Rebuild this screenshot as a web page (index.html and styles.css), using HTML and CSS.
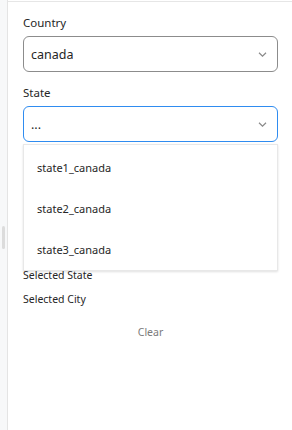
FILE: index.html
```html
<!DOCTYPE html>
<html lang="en">
<head>
  <meta charset="UTF-8">
  <meta name="viewport" content="width=device-width, initial-scale=1.0">
  <title>Country State City</title>
  <link rel="stylesheet" href="styles.css">
</head>
<body>
  <div class="page">
    <aside class="rail">
      <div class="rail-thumb"></div>
    </aside>

    <main class="panel">
      <div class="field">
        <label class="field-label">Country</label>
        <div class="select">
          <span class="select-value">canada</span>
          <svg class="chevron" width="9" height="5" viewBox="0 0 9 5"><path d="M1 0.8l3.5 3.4 3.5-3.4" fill="none" stroke="#8a8a8a" stroke-width="1.2"/></svg>
        </div>
      </div>

      <div class="field">
        <label class="field-label">State</label>
        <div class="select select-focus">
          <span class="select-value">...</span>
          <svg class="chevron" width="9" height="5" viewBox="0 0 9 5"><path d="M1 0.8l3.5 3.4 3.5-3.4" fill="none" stroke="#8a8a8a" stroke-width="1.2"/></svg>
        </div>
        <!-- open list lies over the rest of the form -->
        <ul class="dropdown">
          <li>state1_canada</li>
          <li>state2_canada</li>
          <li>state3_canada</li>
        </ul>
      </div>

      <div class="summary">
        <p>Selected State</p>
        <p>Selected City</p>
      </div>

      <button class="clear-btn">Clear</button>
    </main>
  </div>
</body>
</html>
```

FILE: styles.css
```css
body {
  margin: 0;
  padding: 0;
  font-family: 'Noto Sans', 'Open Sans', sans-serif;
  color: #262626;
  background-color: #fff;
}

.page {
  display: flex;
  min-height: 430px;
}

/* left rail */
.rail {
  width: 7px;
  flex-shrink: 0;
  background-color: #f7f8f9;
  border-right: 1px solid #e4e4e4;
  position: relative;
}

.rail-thumb {
  position: absolute;
  left: 2px;
  top: 226px;
  width: 3px;
  height: 23px;
  background-color: #dcdcdc;
  border-radius: 2px;
}

/* form */
.panel {
  flex: 1;
  margin-top: 1px;
  border-top: 1px solid #e6e6e6;
  padding: 13px 14px 0 15px;
}

.field {
  position: relative;
  margin-bottom: 13px;
}

.field-label {
  display: block;
  font-size: 11.5px;
  line-height: 16px;
  margin: 0 0 5px;
}

.select {
  height: 34px;
  border: 1px solid #8c8c8c;
  border-radius: 6px;
  display: flex;
  align-items: center;
  justify-content: space-between;
  padding: 0 10px 0 7px;
}

.select-focus {
  border-color: #2f8cf0;
}

.select-value {
  font-size: 12.5px;
}

.chevron {
  display: block;
}

.dropdown {
  position: absolute;
  left: 0;
  right: 0;
  top: calc(100% + 2px);
  margin: 0;
  padding: 2px 0 0;
  list-style: none;
  background-color: #fff;
  border: 1px solid #e8e8e8;
  box-shadow: 0 1px 2px rgba(0, 0, 0, 0.12);
  z-index: 10;
}

.dropdown li {
  height: 41px;
  line-height: 41px;
  padding-left: 13px;
  font-size: 11px;
}

.summary {
  margin-top: 125px;
}

.summary p {
  margin: 0 0 8px;
  font-size: 10.5px;
  line-height: 16px;
}

.clear-btn {
  display: block;
  margin: 17px auto 0;
  background: none;
  border: none;
  font-family: inherit;
  font-size: 10.5px;
  line-height: 16px;
  color: #7a7a7a;
  padding: 0;
}
```
